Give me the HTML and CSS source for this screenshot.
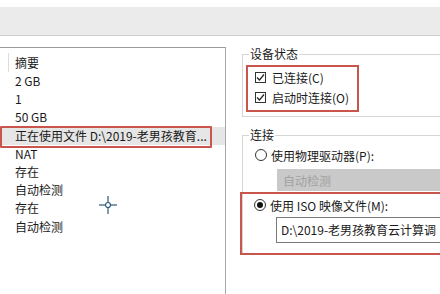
FILE: index.html
```html
<!DOCTYPE html>
<html lang="zh-CN">
<head>
    <meta charset="UTF-8">
    <title>虚拟机设置</title>
    <link rel="stylesheet" href="styles.css">
</head>
<body>
    <div class="toolbar"></div>
    <div class="main">
        <div class="list">
            <div class="row head"><span>摘要</span></div>
            <div class="row">2 GB</div>
            <div class="row">1</div>
            <div class="row">50 GB</div>
            <div class="row selected">正在使用文件 D:\2019-老男孩教育...<span class="mark"></span></div>
            <div class="row">NAT</div>
            <div class="row">存在</div>
            <div class="row">自动检测</div>
            <div class="row">存在</div>
            <div class="row">自动检测</div>
        </div>
        <div class="side">
            <fieldset class="group">
                <legend>设备状态</legend>
                <div class="hl hl-status">
                    <div class="opt">
                        <svg class="check" width="11" height="11" viewBox="0 0 11 11"><rect x="0.5" y="0.5" width="10" height="10" fill="#fff" stroke="#333"/><polyline points="2,5.5 4.5,8 9,2.5" fill="none" stroke="#222" stroke-width="1.2"/></svg>
                        <span>已连接(C)</span>
                    </div>
                    <div class="opt">
                        <svg class="check" width="11" height="11" viewBox="0 0 11 11"><rect x="0.5" y="0.5" width="10" height="10" fill="#fff" stroke="#333"/><polyline points="2,5.5 4.5,8 9,2.5" fill="none" stroke="#222" stroke-width="1.2"/></svg>
                        <span>启动时连接(O)</span>
                    </div>
                </div>
            </fieldset>
            <fieldset class="group conn">
                <legend>连接</legend>
                <div class="opt radio-row">
                    <span class="radio"></span>
                    <span>使用物理驱动器(P):</span>
                </div>
                <div class="combo">自动检测</div>
                <div class="hl hl-iso">
                    <div class="opt radio-row">
                        <span class="radio on"></span>
                        <span>使用 ISO 映像文件(M):</span>
                    </div>
                    <div class="textbox">D:\2019-老男孩教育云计算调</div>
                </div>
            </fieldset>
        </div>
    </div>
    <svg class="cursor" width="18" height="18" viewBox="0 0 18 18">
        <line x1="0" y1="9" x2="6.5" y2="9" stroke="#2d5a76" stroke-width="1.2"/>
        <line x1="11.5" y1="9" x2="18" y2="9" stroke="#2d5a76" stroke-width="1.2"/>
        <line x1="9" y1="0" x2="9" y2="6.5" stroke="#2d5a76" stroke-width="1.2"/>
        <line x1="9" y1="11.5" x2="9" y2="18" stroke="#2d5a76" stroke-width="1.2"/>
        <circle cx="9" cy="9" r="2.5" fill="#fff" stroke="#2d5a76" stroke-width="1.2"/>
    </svg>
</body>
</html>
```
FILE: styles.css
```css
body {
    margin: 0;
    width: 440px;
    height: 294px;
    overflow: hidden;
    position: relative;
    background: #fff;
    font-family: "Noto Sans CJK SC", "DejaVu Sans", sans-serif;
    font-size: 12px;
    color: #1a1a1a;
}
.toolbar {
    margin-top: 7px;
    height: 28px;
    background: #ebebeb;
    border-bottom: 1px solid #cfcfcf;
}
.main {
    display: flex;
    margin-top: 10px;
    height: 248px;
}
.list {
    width: 225px;
    flex: none;
    margin-top: 1px;
    border-top: 1px solid #9a9a9a;
    border-right: 1px solid #a8a8a8;
    padding-top: 5px;
}
.row {
    position: relative;
    height: 18.2px;
    line-height: 18.2px;
    padding-left: 15px;
    white-space: nowrap;
}
.row.head {
    height: 19px;
    line-height: 19px;
    padding-left: 8px;
    margin-top: -5px;
    padding-top: 5px;
}
.row.head span {
    display: block;
    border-left: 1px solid #dcdcdc;
    padding-left: 6px;
}
.row.selected {
    background: #e6e6e6;
}
.mark {
    position: absolute;
    left: 0;
    top: -1px;
    width: 208px;
    height: 18px;
    border: 2px solid #c9564d;
    border-radius: 1px;
}
.side {
    flex: 1;
    min-width: 0;
    padding-left: 16px;
    overflow-x: clip;
}
.group {
    margin: 0 -40px 0 0;
    padding: 0 0 4px 6px;
    border: 1px solid #d6d6d6;
}
.group legend {
    padding: 0 1px;
    line-height: 16px;
}
.hl {
    border: 2px solid #c9564d;
}
.hl-status {
    width: 102px;
    margin: 3px 0 0 -3px;
    padding: 0 0 3px 7px;
}
.opt {
    display: flex;
    align-items: center;
    height: 20px;
    white-space: nowrap;
}
.check {
    margin-right: 6px;
    flex: none;
}
.conn {
    margin-top: 10px;
    padding-bottom: 0;
    border-bottom: none;
}
.radio-row {
    margin-top: 2px;
    padding-left: 6px;
}
.radio {
    width: 10px;
    height: 10px;
    border: 1px solid #333;
    border-radius: 50%;
    background: #fff;
    margin-right: 4px;
    position: relative;
    flex: none;
}
.radio.on::after {
    content: "";
    position: absolute;
    left: 2px;
    top: 2px;
    width: 6px;
    height: 6px;
    border-radius: 50%;
    background: #111;
}
.combo {
    margin: 4px 0 0 28px;
    height: 22px;
    line-height: 24px;
    padding-left: 6px;
    background: #c9c9c9;
    color: #a2a2a2;
}
.hl-iso {
    margin: 1px 0 0 -9px;
    padding: 1px 0 10px 0;
}
.hl-iso .radio-row {
    margin-top: 0;
    padding-left: 12px;
}
.textbox {
    margin: 2px 0 0 34px;
    height: 24px;
    line-height: 24px;
    padding-left: 4px;
    border: 1px solid #7a7a7a;
    background: #fff;
    white-space: nowrap;
}
.cursor {
    position: absolute;
    left: 99px;
    top: 196px;
}
```
